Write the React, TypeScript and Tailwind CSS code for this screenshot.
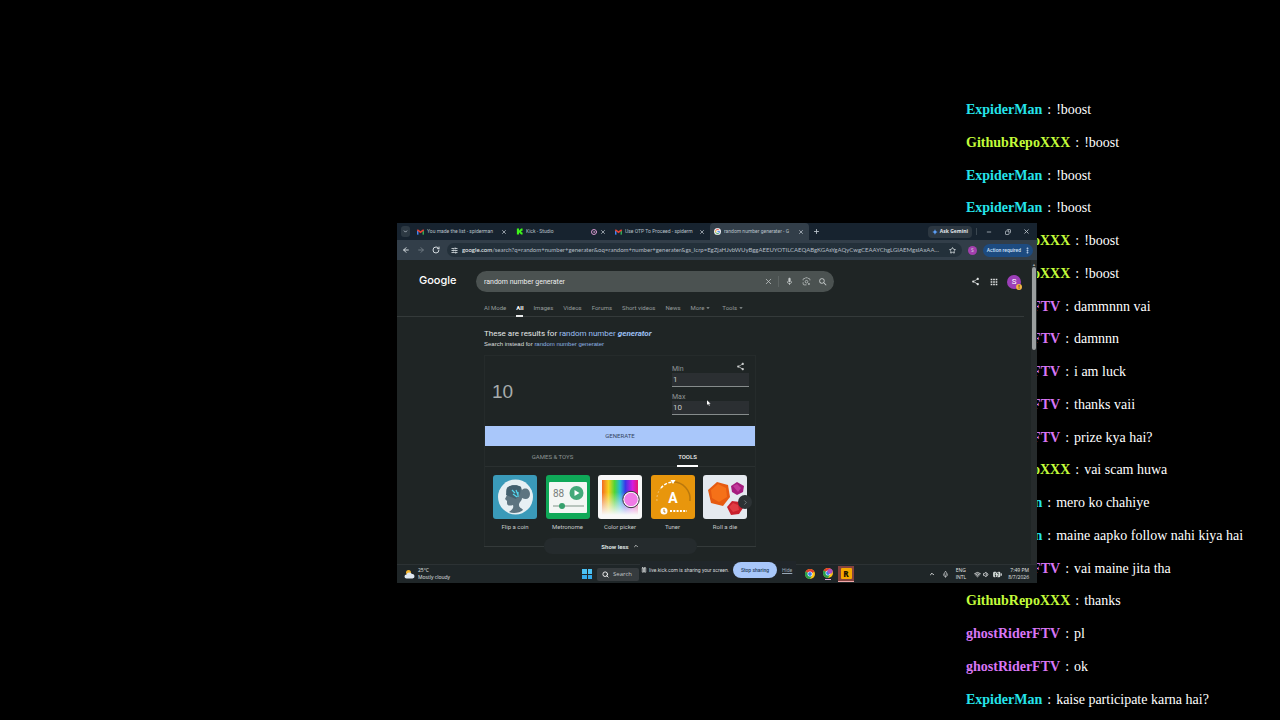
import {
  ArrowLeft,
  ArrowRight,
  BatteryCharging,
  ChevronDown,
  ChevronRight,
  ChevronUp,
  CircleDot,
  Copy,
  EllipsisVertical,
  Mic,
  Minus,
  Pause,
  Plus,
  RotateCw,
  Search,
  SlidersHorizontal,
  Star,
  Volume1,
  Wifi,
  X,
} from "lucide-react";
import { MdApps, MdArrowDropDown, MdMic, MdSearch, MdShare } from "react-icons/md";

const users = {
  spider: { name: "ExpiderMan", color: "text-[#25e4ea]" },
  github: { name: "GithubRepoXXX", color: "text-[#c3fb3a]" },
  ghost: { name: "ghostRiderFTV", color: "text-[#d976f5]" },
};

const messages: { user: keyof typeof users; text: string }[] = [
  { user: "spider", text: "!boost" },
  { user: "github", text: "!boost" },
  { user: "spider", text: "!boost" },
  { user: "spider", text: "!boost" },
  { user: "github", text: "!boost" },
  { user: "github", text: "!boost" },
  { user: "ghost", text: "dammnnn vai" },
  { user: "ghost", text: "damnnn" },
  { user: "ghost", text: "i am luck" },
  { user: "ghost", text: "thanks vaii" },
  { user: "ghost", text: "prize kya hai?" },
  { user: "github", text: "vai scam huwa" },
  { user: "spider", text: "mero ko chahiye" },
  { user: "spider", text: "maine aapko follow nahi kiya hai" },
  { user: "ghost", text: "vai maine jita tha" },
  { user: "github", text: "thanks" },
  { user: "ghost", text: "pl" },
  { user: "ghost", text: "ok" },
  { user: "spider", text: "kaise participate karna hai?" },
];

const Chat = () => (
  <ul className="ml-auto flex min-h-screen w-1/4 flex-col justify-between pt-[101px] pr-2 pb-[11px] pl-[6px] font-['Liberation_Serif',serif] text-[14px] leading-[18px] text-white">
    {messages.map((m, i) => (
      <li key={i} className="flex gap-[5px] whitespace-nowrap">
        <span className={`font-bold ${users[m.user].color}`}>{users[m.user].name}</span>
        <span>:</span>
        <span>{m.text}</span>
      </li>
    ))}
  </ul>
);

const GmailIcon = () => (
  <svg viewBox="0 0 24 18" className="h-[6px] w-[7px] shrink-0">
    <path d="M0 2v14a2 2 0 0 0 2 2h3V7z" fill="#4285f4" />
    <path d="M24 2v14a2 2 0 0 1-2 2h-3V7z" fill="#34a853" />
    <path d="M0 2C0 0 2-.6 4 .8l8 6 8-6C22-.6 24 0 24 2v2L12 13 0 4z" fill="#ea4335" />
  </svg>
);

const KickIcon = () => (
  <svg viewBox="0 0 16 16" className="h-[7px] w-[7px] shrink-0">
    <path d="M2 1h5v4h2V3h2V1h4v5h-2v1h-1v2h1v1h2v5h-4v-2H9v-2H7v4H2z" fill="#3ef51a" />
  </svg>
);

const GoogleIcon = () => (
  <svg viewBox="0 0 16 16" className="h-[7px] w-[7px] shrink-0">
    <circle cx="8" cy="8" r="8" fill="#e8eaed" />
    <path d="M4 6a4.6 4.6 0 0 1 7-2" stroke="#ea4335" strokeWidth="2" fill="none" />
    <path d="M4 6a4.6 4.6 0 0 0 0 4" stroke="#fbbc04" strokeWidth="2" fill="none" />
    <path d="M4 10a4.6 4.6 0 0 0 7 2" stroke="#34a853" strokeWidth="2" fill="none" />
    <path d="M8 8h4.6a4.6 4.6 0 0 1-1.6 4" stroke="#4285f4" strokeWidth="2" fill="none" />
  </svg>
);

const ChromeIcon = ({ badge = false }: { badge?: boolean }) => (
  <svg viewBox="0 0 24 24" className="h-[10px] w-[10px]">
    <circle cx="12" cy="12" r="12" fill="#fbc116" />
    <path d="M12 12 1.6 6A12 12 0 0 1 22.4 6z" fill="#e33b2e" />
    <path d="M12 12 1.6 6A12 12 0 0 0 12 24l5-9z" fill="#269e4f" />
    <path d="M12 6h10.4L12 12z" fill="#e33b2e" />
    <circle cx="12" cy="12" r="6" fill="#fff" />
    <circle cx="12" cy="12" r="4.6" fill="#3b7ded" />
    {badge && <circle cx="17" cy="8" r="6" fill="#b04fc4" />}
  </svg>
);

const LensIcon = () => (
  <svg viewBox="0 0 24 24" className="h-[9px] w-[9px]" fill="none" stroke="currentColor" strokeWidth="2">
    <path d="M3 9V7a3 3 0 0 1 3-3h2l1.500-2h5L16 4h2a3 3 0 0 1 3 3v2M3 14v4a3 3 0 0 0 3 3h6" />
    <circle cx="12" cy="12.500" r="3.500" />
    <circle cx="18.500" cy="18.500" r="1.500" fill="currentColor" />
  </svg>
);

const tabs = [
  { icon: <GmailIcon />, title: "You made the list - spiderman" },
  { icon: <KickIcon />, title: "Kick - Studio", recording: true },
  { icon: <GmailIcon />, title: "Use OTP To Proceed - spiderm" },
  { icon: <GoogleIcon />, title: "random number generater - G", active: true },
];

const TabStrip = () => (
  <div className="flex h-[17px] items-center bg-[#17232f] pr-px pl-1 text-[#b9c2ca]">
    <button aria-label="Search tabs" className="mr-[3px] flex h-[11px] w-[9px] items-center justify-center rounded-[3px] bg-[#2d3943]">
      <ChevronDown className="h-[5px] w-[5px]" strokeWidth={4} />
    </button>
    {tabs.map((tab, i) => (
      <div
        key={i}
        className={`flex h-full w-[99px] min-w-0 items-center gap-[3px] rounded-t-[4px] pr-[5px] pl-[4px] ${
          tab.active ? "bg-[#323e49]" : ""
        }`}
      >
        {tab.icon}
        <span className="min-w-0 flex-1 overflow-hidden font-['Roboto',sans-serif] text-[5px] leading-[9px] whitespace-nowrap">
          {tab.title}
        </span>
        {tab.recording && <CircleDot className="h-[6px] w-[6px] text-[#d79bd0]" strokeWidth={4} />}
        <button aria-label={`Close ${tab.title}`}>
          <X className="h-[6px] w-[6px]" strokeWidth={3} />
        </button>
      </div>
    ))}
    <button aria-label="New tab" className="ml-[4px]">
      <Plus className="h-[7px] w-[7px]" strokeWidth={3} />
    </button>
    <button className="ml-auto flex h-[12px] items-center gap-[2px] rounded-[4px] bg-[#2c3741] px-[4px] text-[5px] leading-[9px] font-bold whitespace-nowrap text-[#e1e6ea]">
      <svg viewBox="0 0 16 16" className="h-[6px] w-[6px]">
        <path d="M8 0c.8 4.500 3.500 7.200 8 8-4.500.8-7.200 3.500-8 8-.8-4.500-3.500-7.200-8-8 4.500-.8 7.200-3.500 8-8z" fill="#5b9df5" />
      </svg>
      Ask Gemini
    </button>
    <span className="mr-[2px] ml-1 h-[7px] w-px bg-[#3a4650]" />
    <button aria-label="Minimize" className="flex w-[19px] justify-center">
      <Minus className="h-[6px] w-[6px]" strokeWidth={3} />
    </button>
    <button aria-label="Restore" className="flex w-[19px] justify-center">
      <Copy className="h-[6px] w-[6px] -scale-x-100" strokeWidth={3} />
    </button>
    <button aria-label="Close" className="flex w-[19px] justify-center">
      <X className="h-[7px] w-[7px]" strokeWidth={3} />
    </button>
  </div>
);

const url =
  "/search?q=random+number+generater&oq=random+number+generater&gs_lcrp=EgZjaHJvbWUyBggAEEUYOTILCAEQABgKGAsYgAQyCwgCEAAYChgLGIAEMgsIAxAAGAoYCxiABDILCAQQABgKGAsYgAQ";

const Toolbar = () => (
  <div className="flex h-[20px] items-center bg-[#323e49] pr-1 pl-[5px] text-[#d3dade]">
    <button aria-label="Back">
      <ArrowLeft className="h-[8px] w-[8px]" strokeWidth={3} />
    </button>
    <button aria-label="Forward" className="ml-[7px] text-[#6d7881]">
      <ArrowRight className="h-[8px] w-[8px]" strokeWidth={3} />
    </button>
    <button aria-label="Reload" className="ml-[7px]">
      <RotateCw className="h-[8px] w-[8px]" strokeWidth={3} />
    </button>
    <div className="ml-[7px] flex h-[14px] min-w-0 flex-1 items-center gap-[4px] rounded-full bg-[#23303a] px-[4px]">
      <SlidersHorizontal className="h-[7px] w-[7px] shrink-0" strokeWidth={3} />
      <span className="min-w-0 flex-1 truncate font-['Lato',sans-serif] text-[6px] leading-[10px] text-[#b4bdc4]">
        <span className="text-[#eef1f3]">google.com</span>
        {url}
      </span>
      <button aria-label="Bookmark" className="mr-[2px] ml-[2px]">
        <Star className="h-[7px] w-[7px]" strokeWidth={3} />
      </button>
    </div>
    <button aria-label="Profile" className="ml-[6px] flex h-[9px] w-[9px] items-center justify-center rounded-full bg-[#a33fae] text-[5px] leading-[9px]">
      S
    </button>
    <button className="ml-[6px] flex h-[13px] items-center gap-[3px] rounded-full bg-[#1d4b80] pr-[2px] pl-[4px] font-['Roboto',sans-serif] text-[5px] leading-[9px] font-medium whitespace-nowrap text-[#cfe2fa]">
      Action required
      <EllipsisVertical className="h-[7px] w-[7px]" strokeWidth={4} />
    </button>
  </div>
);

const SearchHeader = () => (
  <header className="flex items-center pt-[11px] pr-[10px] pl-[22px] text-[#dfe2e2]">
    <a href="#" className="mb-[3px] w-[57px] font-['Inter',sans-serif] text-[11px] leading-[16px] font-medium text-white">
      Google
    </a>
    <form className="flex h-[21px] w-[358px] items-center rounded-full bg-[#4b5251] pr-[6px] pl-[8px] text-[#c3c8c8]">
      <input
        aria-label="Search"
        defaultValue="random number generater"
        className="min-w-0 flex-1 bg-transparent text-[7px] leading-[10px] text-[#eceeee] outline-none"
      />
      <button type="button" aria-label="Clear">
        <X className="h-[9px] w-[9px]" strokeWidth={2} />
      </button>
      <span className="mr-[6px] ml-[5px] h-[11px] w-px bg-[#5d6463]" />
      <button type="button" aria-label="Search by voice">
        <MdMic className="h-[9px] w-[9px]" />
      </button>
      <button type="button" aria-label="Search by image" className="ml-[8px]">
        <LensIcon />
      </button>
      <button type="submit" aria-label="Search now" className="ml-[7px]">
        <MdSearch className="h-[10px] w-[10px]" />
      </button>
    </form>
    <button aria-label="Share" className="ml-auto">
      <MdShare className="h-[9px] w-[9px]" />
    </button>
    <button aria-label="Google apps" className="ml-[9px]">
      <MdApps className="h-[10px] w-[10px]" />
    </button>
    <button aria-label="Account" className="relative ml-[8px] h-[14px] w-[14px] rounded-full bg-[#9c3fb8] text-[8px] leading-[14px] text-white">
      S
      <span className="absolute -right-px -bottom-px h-[6px] w-[6px] rounded-full bg-[#f2b544] text-[5px] leading-[6px] font-bold text-[#3c2b05]">
        !
      </span>
    </button>
  </header>
);

const navItems = ["AI Mode", "All", "Images", "Videos", "Forums", "Short videos", "News", "More", "Tools"];

const ResultNav = () => (
  <nav className="mr-[7px] flex gap-[10px] border-b border-[#343a3a] pt-[11px] pl-[87px] text-[6px] leading-[9px] text-[#969c9c]">
    {navItems.map((item) => (
      <a
        key={item}
        href="#"
        className={`-mb-px flex items-center border-b-2 pb-[3px] whitespace-nowrap ${
          item === "All" ? "border-[#e8eaea] font-bold text-white" : "border-transparent"
        }`}
      >
        {item}
        {(item === "More" || item === "Tools") && <MdArrowDropDown className="h-[8px] w-[8px]" />}
      </a>
    ))}
  </nav>
);

const CoinArt = () => (
  <svg viewBox="0 0 44 44" className="h-full w-full">
    <rect width="44" height="44" fill="#3a9ab9" />
    <circle cx="22.500" cy="22" r="17.500" fill="#e6eff3" />
    <path d="M14 13c2-3 10-4 14-1l1 3c3-3 8-1 8 4s-4 6-8 4c0 3-3 4-3 7 0 3 3 3 4 5-3 3-10 4-14 2 3-2 5-4 4-7-3 1-6 1-6-2v-2l-2-2 2-4c-1-3-1-5 0-7z" fill="#5d7480" />
    <path d="M14 13c2-3 10-4 14-1l-1 7-4 5-10-4z" fill="#43606e" />
    <path d="M19 15l3 3m1-3 2 5m-5-1 4 3m1-5v5" stroke="#53d5ee" strokeWidth="1.200" />
  </svg>
);

const MetronomeArt = () => (
  <svg viewBox="0 0 44 44" className="h-full w-full">
    <rect width="44" height="44" fill="#0fa958" />
    <rect x="3" y="7" width="38" height="31" rx="1" fill="#f3f6f4" />
    <text x="7" y="22" fontSize="10" fill="#777e7b" fontFamily="Roboto, sans-serif">
      88
    </text>
    <circle cx="30.500" cy="18" r="7" fill="#43a97a" />
    <path d="M28.500 15v6l5-3z" fill="#fff" />
    <path d="M7 31h31" stroke="#a6b4ad" strokeWidth="1.500" />
    <circle cx="16" cy="31" r="3" fill="#34a06c" />
  </svg>
);

const ColorArt = () => (
  <svg viewBox="0 0 44 44" className="h-full w-full">
    <defs>
      <linearGradient id="hue">
        <stop offset="0" stopColor="#f36a21" />
        <stop offset=".18" stopColor="#f6d21c" />
        <stop offset=".35" stopColor="#4fd536" />
        <stop offset=".5" stopColor="#22b9d6" />
        <stop offset=".65" stopColor="#3a36e8" />
        <stop offset=".85" stopColor="#d51be0" />
        <stop offset="1" stopColor="#e61b6b" />
      </linearGradient>
      <linearGradient id="fade" x2="0" y2="1">
        <stop offset=".35" stopColor="#f8f8f8" stopOpacity="0" />
        <stop offset="1" stopColor="#f8f8f8" />
      </linearGradient>
    </defs>
    <rect width="44" height="44" fill="#f8f8f8" />
    <rect x="4" y="5" width="36" height="35" fill="url(#hue)" />
    <rect x="4" y="5" width="36" height="35" fill="url(#fade)" />
    <circle cx="33" cy="24.500" r="7.500" fill="#ef7be6" stroke="#fff" strokeWidth="1.500" />
    <circle cx="33" cy="24.500" r="8.200" fill="none" stroke="#332c38" strokeWidth="1" />
  </svg>
);

const TunerArt = () => (
  <svg viewBox="0 0 44 44" className="h-full w-full">
    <rect width="44" height="44" fill="#e8960c" />
    <path d="M6 26A17 17 0 0 1 10 13" stroke="#f3c273" strokeWidth="1" strokeDasharray="2 2" fill="none" />
    <path d="M10 13A16 16 0 0 1 22 7" stroke="#fff" strokeWidth="1.500" strokeDasharray="3 1.500" fill="none" />
    <path d="M22 7a17 17 0 0 1 17 19" stroke="#b9780d" strokeWidth="1.500" fill="none" />
    <path d="M19.500 5h5L22 9z" fill="#fff" />
    <text x="22" y="28" fontSize="14" fontWeight="700" fill="#fff" textAnchor="middle" fontFamily="Roboto, sans-serif">
      A
    </text>
    <circle cx="13" cy="36" r="3.500" fill="#fff" />
    <path d="M13 34v3l1.500 0" stroke="#c77f0a" fill="none" />
    <path d="M19 36h17" stroke="#fff" strokeWidth="2" strokeDasharray="2 1.300" />
  </svg>
);

const DieArt = () => (
  <svg viewBox="0 0 44 44" className="h-full w-full">
    <rect width="44" height="44" fill="#e4e9ef" />
    <path d="M5 15l9-8 11 3 2 12-7 9-12-3z" fill="#e65a10" />
    <path d="M8 15l7-6 8 4 1 9-8 5-7-4z" fill="#f57118" />
    <path d="M28 11l6-4 7 4-1 6-6 3-5-3z" fill="#a51c7e" />
    <path d="M30 11l4-2 4 4-3 4z" fill="#c23a9b" />
    <path d="M24 32l5-6 8 1 3 6-4 6-8 1z" fill="#c9202d" />
    <path d="M26 32l4-4 5 2 1 5-6 2z" fill="#e03c43" />
  </svg>
);

const tools = [
  { label: "Flip a coin", art: <CoinArt /> },
  { label: "Metronome", art: <MetronomeArt /> },
  { label: "Color picker", art: <ColorArt /> },
  { label: "Tuner", art: <TunerArt /> },
  { label: "Roll a die", art: <DieArt /> },
];

const inputClass =
  "block h-[14px] w-full border-b border-[#868c8c] bg-[#2b2f32] pl-px text-[8px] leading-[12px] text-[#c5c9c9] outline-none";

const NumberGenerator = () => (
  <section className="mt-[5px] w-[272px]">
    <div className="border border-b-0 border-[#252b2b] pb-[15px]">
      <div className="flex items-center justify-between pt-[6px] pr-[6px] pb-[11px] pl-[7px]">
        <output className="pt-[7px] font-['Liberation_Sans',sans-serif] text-[19px] leading-[24px] text-[#a7acac]">10</output>
        <div className="w-[77px] text-[7px] leading-[8px] text-[#8f9595]">
          <div className="flex h-[11px] justify-between pr-[4px]">
            <label htmlFor="min" className="self-end">
              Min
            </label>
            <button aria-label="Share result" className="self-start text-[#c9cccc]">
              <MdShare className="h-[9px] w-[9px]" />
            </button>
          </div>
          <input id="min" defaultValue="1" className={inputClass} />
          <label htmlFor="max" className="mt-[6px] block">
            Max
          </label>
          <input id="max" defaultValue="10" className={inputClass} />
        </div>
      </div>
      <button className="block h-[20px] w-full bg-[#a9c7fa] text-[6px] leading-[10px] text-[#35455f]">
        GENERATE
      </button>
      <div className="grid grid-cols-2 border-b border-[#2a3030] text-[6px] leading-[9px] text-[#8f9595]">
        <button className="-mb-px pt-[6px] pb-[6px]">GAMES &amp; TOYS</button>
        <button className="-mb-px justify-self-center border-b-2 border-white px-px pt-[6px] pb-[4px] font-medium text-[#eef0f0]">
          TOOLS
        </button>
      </div>
      <div className="relative flex justify-between px-[8px] pt-[8px]">
        {tools.map((tool) => (
          <a key={tool.label} href="#" className="w-[44px] text-center">
            <div className="h-[44px] overflow-hidden rounded-[3px]">{tool.art}</div>
            <span className="mt-[3px] block text-[6px] leading-[9px] whitespace-nowrap text-[#c6caca]">
              {tool.label}
            </span>
          </a>
        ))}
        <button
          aria-label="Next"
          className="absolute top-[28px] right-[3px] flex h-[14px] w-[14px] items-center justify-center rounded-full bg-[#2c3234] text-[#9fa5a5]"
        >
          <ChevronRight className="h-[7px] w-[7px]" />
        </button>
      </div>
    </div>
    <div className="-mt-[8px] flex items-center">
      <span className="h-px flex-1 bg-[#343a3a]" />
      <button className="flex h-[16px] w-[153px] items-center justify-center gap-[4px] rounded-full bg-[#252b2d] text-[6px] leading-[9px] font-bold text-[#dfe2e2]">
        Show less
        <ChevronUp className="h-[6px] w-[6px]" strokeWidth={3} />
      </button>
      <span className="h-px flex-1 bg-[#343a3a]" />
    </div>
  </section>
);

const ResultsPage = () => (
  <div className="flex bg-[#1f2525] font-['Roboto','Liberation_Sans',sans-serif]">
    <main className="min-w-0 flex-1 pb-[10px]">
      <SearchHeader />
      <ResultNav />
      <div className="pt-[12px] pl-[87px]">
        <p className="text-[8px] leading-[10px] text-[#e6e9e9]">
          These are results for{" "}
          <a href="#" className="text-[#9dc0f5]">
            random number <b className="italic">generator</b>
          </a>
        </p>
        <p className="font-['Liberation_Sans',sans-serif] text-[6px] leading-[11px] text-[#dcdfdf]">
          Search instead for{" "}
          <a href="#" className="text-[#8fb4e6]">
            random number generater
          </a>
        </p>
        <NumberGenerator />
      </div>
    </main>
    <div className="flex w-[6px] flex-col items-center bg-[#262b2c] pt-[2px]">
      <span className="text-[4px] leading-[5px] text-[#a2a6a6]">▲</span>
      <div className="h-[83px] w-[4px] rounded-full bg-[#9a9e9e]" />
    </div>
  </div>
);

const SharingBar = () => (
  <div className="absolute bottom-[4px] left-[243px] flex h-[18px] items-center bg-[#20262a] pr-[4px] pl-px font-['Roboto',sans-serif] text-[5px] leading-[9px] whitespace-nowrap text-[#d5d9db]">
    <Pause className="mr-[2px] h-[6px] w-[6px]" strokeWidth={3} />
    live.kick.com is sharing your screen.
    <button className="ml-[4px] h-[16px] w-[44px] rounded-full bg-[#a8c7fa] font-medium text-[#24405f]">
      Stop sharing
    </button>
    <button className="ml-[5px] text-[#98a6b5] underline">Hide</button>
  </div>
);

const Taskbar = () => (
  <div className="grid h-[19px] grid-cols-[1fr_auto_1fr] items-center border-t border-[#2c3234] bg-[#1f2628] text-[5px] leading-[7px] text-[#e1e4e5]">
    <div className="flex items-center gap-[3px] pl-[7px]">
      <svg viewBox="0 0 22 22" className="h-[11px] w-[11px]">
        <circle cx="9" cy="7" r="5" fill="#f4b52c" />
        <path d="M5 19a4 4 0 0 1 0-8 6 6 0 0 1 11-1 4.500 4.500 0 0 1 1 9z" fill="#dfe7f0" />
      </svg>
      <div>
        <p>25°C</p>
        <p>Mostly cloudy</p>
      </div>
    </div>
    <div className="flex items-center pl-[2px]">
      <button aria-label="Start" className="grid h-[10px] w-[10px] grid-cols-2 gap-px">
        <span className="bg-[#4cc2f5]" />
        <span className="bg-[#4cc2f5]" />
        <span className="bg-[#36abeb]" />
        <span className="bg-[#36abeb]" />
      </button>
      <button className="ml-[5px] flex h-[13px] w-[42px] items-center gap-[4px] rounded-[2px] bg-[#363b3e] pl-[5px] text-[6px] text-[#c3c7c9]">
        <Search className="h-[7px] w-[7px] text-white" strokeWidth={3} />
        Search
      </button>
      <button aria-label="Chrome" className="ml-[166px]">
        <ChromeIcon />
      </button>
      <button aria-label="Chrome, profile window" className="ml-[8px] flex flex-col items-center">
        <ChromeIcon badge />
        <span className="mt-px h-px w-[6px] bg-[#e6a6d8]" />
      </button>
      <button aria-label="Rockstar Games" className="ml-[5px] flex h-[16px] w-[16px] items-center justify-center border-b border-[#f0a9a9] bg-[#84423f]">
        <span className="h-[11px] w-[11px] rounded-[1px] bg-[#f5a800] text-[8px] leading-[11px] font-black text-[#1d1500]">R</span>
      </button>
    </div>
    <div className="flex items-center justify-end pr-[8px]">
      <ChevronUp className="h-[6px] w-[6px]" strokeWidth={4} />
      <Mic className="ml-[7px] h-[7px] w-[7px]" />
      <p className="mr-[8px] ml-[7px] text-center">
        ENG
        <br />
        INTL
      </p>
      <Wifi className="h-[7px] w-[7px]" strokeWidth={3} />
      <Volume1 className="ml-[2px] h-[7px] w-[7px]" strokeWidth={3} />
      <BatteryCharging className="ml-[3px] h-[9px] w-[9px] fill-[#aebfb4]" strokeWidth={3} />
      <p className="ml-[6px] text-right">
        7:49 PM
        <br />
        8/7/2026
      </p>
    </div>
  </div>
);

const SharedScreen = () => (
  <section
    aria-label="Shared screen"
    className="absolute top-[223px] left-[397px] w-1/2 overflow-hidden bg-[#1f2525] font-['Open_Sans','Noto_Sans',sans-serif]"
  >
    <TabStrip />
    <Toolbar />
    <ResultsPage />
    <Taskbar />
    <SharingBar />
    <svg viewBox="0 0 10 14" className="absolute top-[177px] left-[310px] h-[6px] w-[4px]">
      <path d="M0 0v12l3-3 2 5 2-1-2-4h4z" fill="#fff" />
    </svg>
  </section>
);

const App = () => {
  return (
    <div className="relative min-h-screen overflow-hidden bg-black">
      <Chat />
      <SharedScreen />
    </div>
  );
};

export default App;
